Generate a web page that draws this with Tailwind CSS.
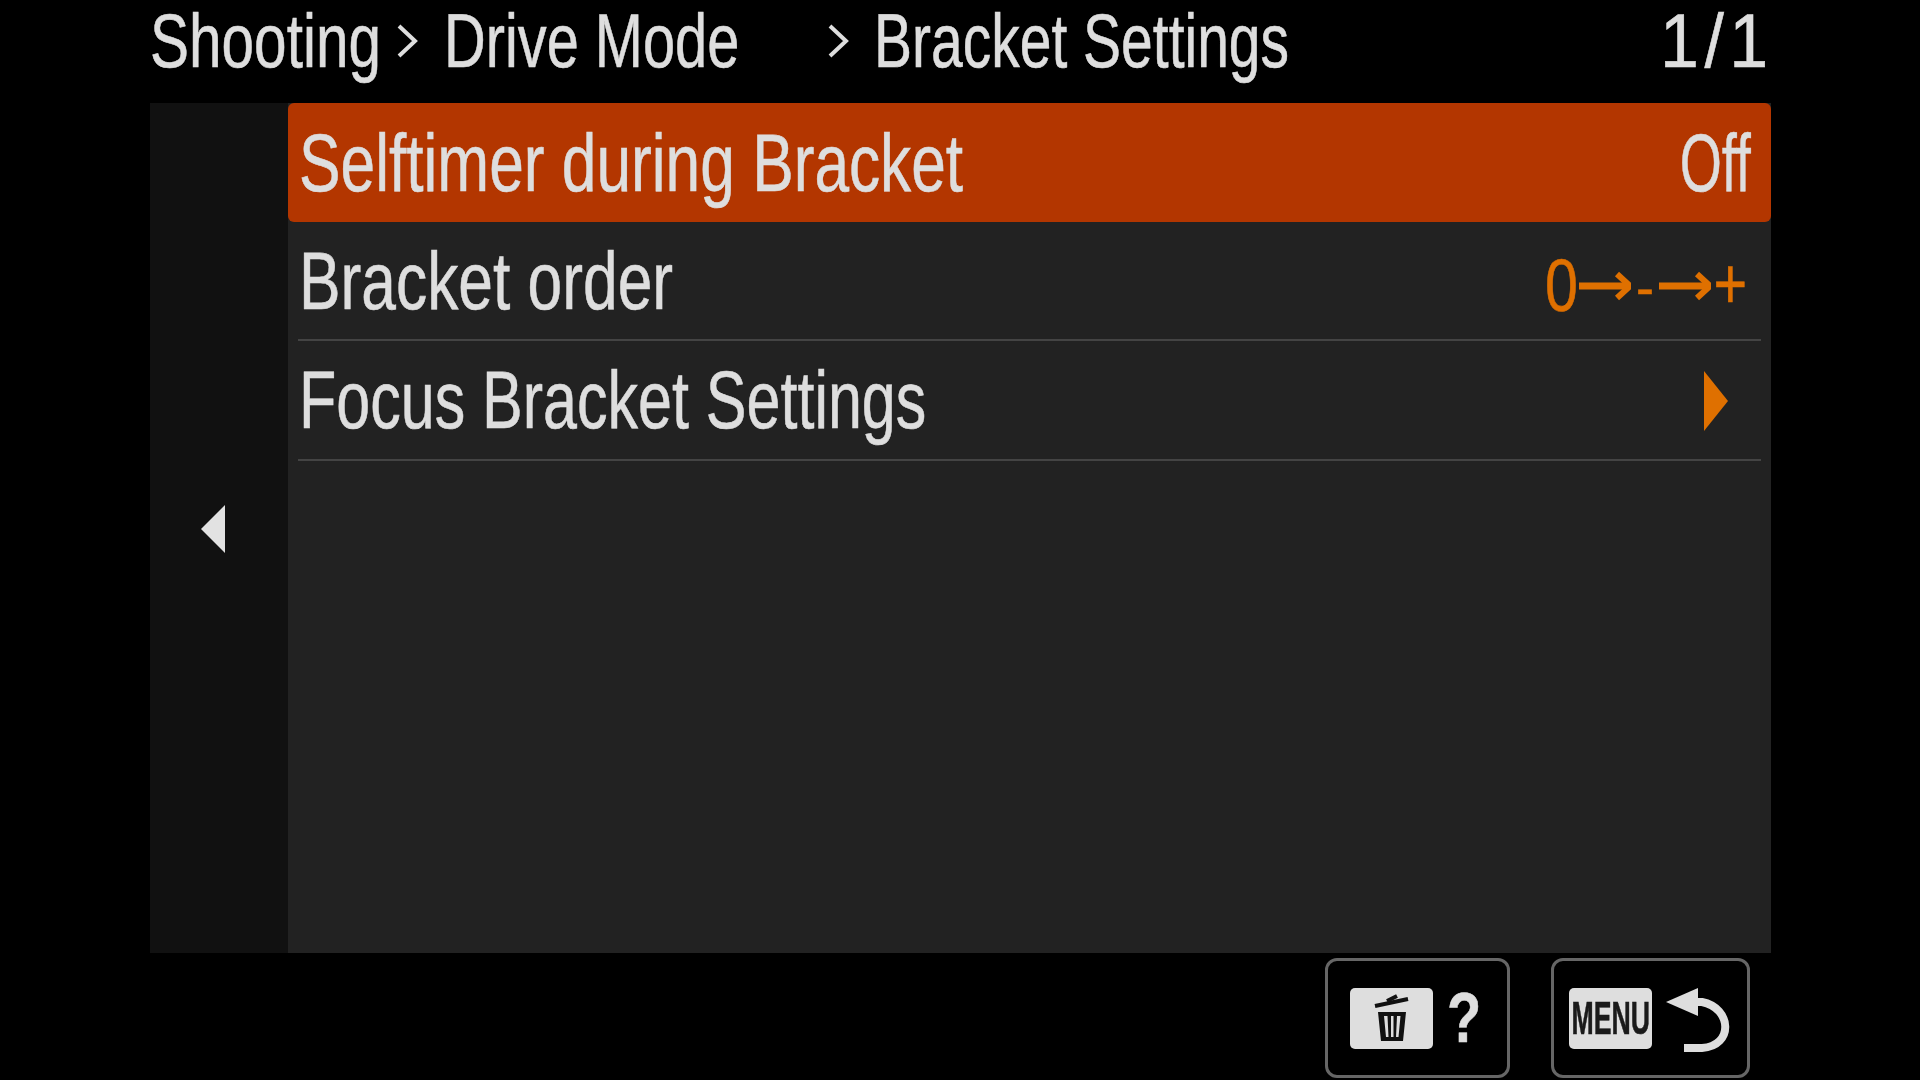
<!DOCTYPE html>
<html lang="en">

<head>
    <meta charset="UTF-8">
    <title>Bracket Settings</title>
    <script src="https://cdn.jsdelivr.net/npm/@tailwindcss/browser@4"></script>
</head>

<body class="bg-black overflow-hidden">
    <div class="w-[1920px] h-[1080px] flex flex-col font-['Liberation_Sans',sans-serif] text-[#dedede] blur-[0.6px] [-webkit-text-stroke:0.6px]">

        <!-- breadcrumb -->
        <div class="h-[103px] pl-[150px] pb-[22px] flex items-center text-[76px] leading-none whitespace-nowrap">
            <span class="w-[244px] inline-block origin-left scale-x-[0.77]">Shooting</span>
            <svg class="w-[26px] h-[42px] mr-[24px]" viewBox="0 0 26 42"><path d="M5 6 L21 21 L5 36" fill="none" stroke="#dedede" stroke-width="4" /></svg>
            <span class="w-[381px] inline-block origin-left scale-x-[0.76]">Drive Mode</span>
            <svg class="w-[26px] h-[42px] mr-[23px]" viewBox="0 0 26 42"><path d="M5 6 L21 21 L5 36" fill="none" stroke="#dedede" stroke-width="4" /></svg>
            <span class="w-[786px] inline-block origin-left scale-x-[0.75]">Bracket Settings</span>
            <span class="inline-block origin-left scale-x-[0.92] tracking-[6px]">1/1</span>
        </div>

        <!-- panel -->
        <div class="ml-[150px] w-[1621px] h-[850px] flex">
            <div class="w-[138px] bg-[#111111] flex items-center justify-center">
                <svg class="w-[26px] h-[50px] mr-[13px] mt-[1px]" viewBox="0 0 26 50"><path d="M25 1 V49 L1 25 Z" fill="#e2e2e2" /></svg>
            </div>
            <div class="flex-1 bg-[#222222] text-[82px] leading-none">
                <div class="h-[119px] bg-[#b33600] rounded-[6px] pl-[11px] pr-[20px] flex items-center justify-between">
                    <span class="origin-left scale-x-[0.759] whitespace-nowrap">Selftimer during Bracket</span>
                    <span class="origin-right scale-x-[0.66]">Off</span>
                </div>
                <div class="h-[119px] mx-[10px] pl-[1px] pr-[14px] border-b-2 border-[#444444] flex items-center justify-between">
                    <span class="origin-left scale-x-[0.76] whitespace-nowrap">Bracket order</span>
                    <div class="flex items-center text-[#df7000] text-[74px] mt-[10px]">
                        <span class="w-[34px] origin-left scale-x-[0.8]">0</span>
                        <svg class="w-[52px] h-[30px]" viewBox="0 0 52 28"><path d="M0 14 H48" stroke="#df7000" stroke-width="7" /><path d="M38 2 L51 14 L38 26" fill="none" stroke="#df7000" stroke-width="6" /></svg>
                        <span class="w-[28px] text-center text-[54px] mt-[2px]">-</span>
                        <svg class="w-[52px] h-[30px]" viewBox="0 0 52 28"><path d="M0 14 H48" stroke="#df7000" stroke-width="7" /><path d="M38 2 L51 14 L38 26" fill="none" stroke="#df7000" stroke-width="6" /></svg>
                        <span class="w-[36px] pl-[3px] mt-[-6px] text-[72px] origin-left scale-x-[0.8]">+</span>
                    </div>
                </div>
                <div class="h-[120px] mx-[10px] pl-[1px] pr-[33px] border-b-2 border-[#444444] flex items-center justify-between">
                    <span class="origin-left scale-x-[0.744] whitespace-nowrap">Focus Bracket Settings</span>
                    <svg class="w-[24px] h-[60px] mt-[1px]" viewBox="0 0 24 60"><path d="M0 0 L24 30 L0 60 Z" fill="#df7000" /></svg>
                </div>
            </div>
        </div>

        <!-- key hints -->
        <div class="ml-[1325px] mt-[5px] flex gap-[41px]">
            <div class="w-[185px] h-[120px] border-[3px] border-[#666666] rounded-[12px] flex items-center pl-[22px] gap-[14px]">
                <div class="w-[83px] h-[61px] bg-[#dedede] rounded-[5px] flex items-center justify-center">
                    <svg class="w-[38px] h-[52px]" viewBox="0 0 38 52">
                        <path d="M2 14 L35 7" stroke="#111" stroke-width="4" />
                        <path d="M14 9 L24 4" stroke="#111" stroke-width="4" />
                        <path d="M5 20 H33 L30 49 H8 Z M11 24 L13 45 H15.5 L14.5 24 Z M18 24 V45 H20.5 V24 Z M24 24 L23 45 H25.5 L27.5 24 Z" fill="#111" fill-rule="evenodd" />
                    </svg>
                </div>
                <span class="text-[70px] leading-none font-bold origin-left scale-x-[0.8]">?</span>
            </div>
            <div class="w-[199px] h-[120px] border-[3px] border-[#666666] rounded-[12px] flex items-center pl-[15px] gap-[14px]">
                <div class="w-[83px] h-[61px] bg-[#dedede] rounded-[5px] flex items-center justify-center overflow-hidden">
                    <span class="text-[#1a1a1a] text-[46px] leading-none font-bold scale-x-[0.58] whitespace-nowrap">MENU</span>
                </div>
                <svg class="w-[66px] h-[66px] mt-[5px]" viewBox="0 0 66 66">
                    <path d="M0 14 L32 0 L32 28 Z" fill="#dedede" />
                    <path d="M28 14 H36 C66 20 68 58 36 60 H18" fill="none" stroke="#dedede" stroke-width="8" />
                </svg>
            </div>
        </div>
    </div>
</body>

</html>
